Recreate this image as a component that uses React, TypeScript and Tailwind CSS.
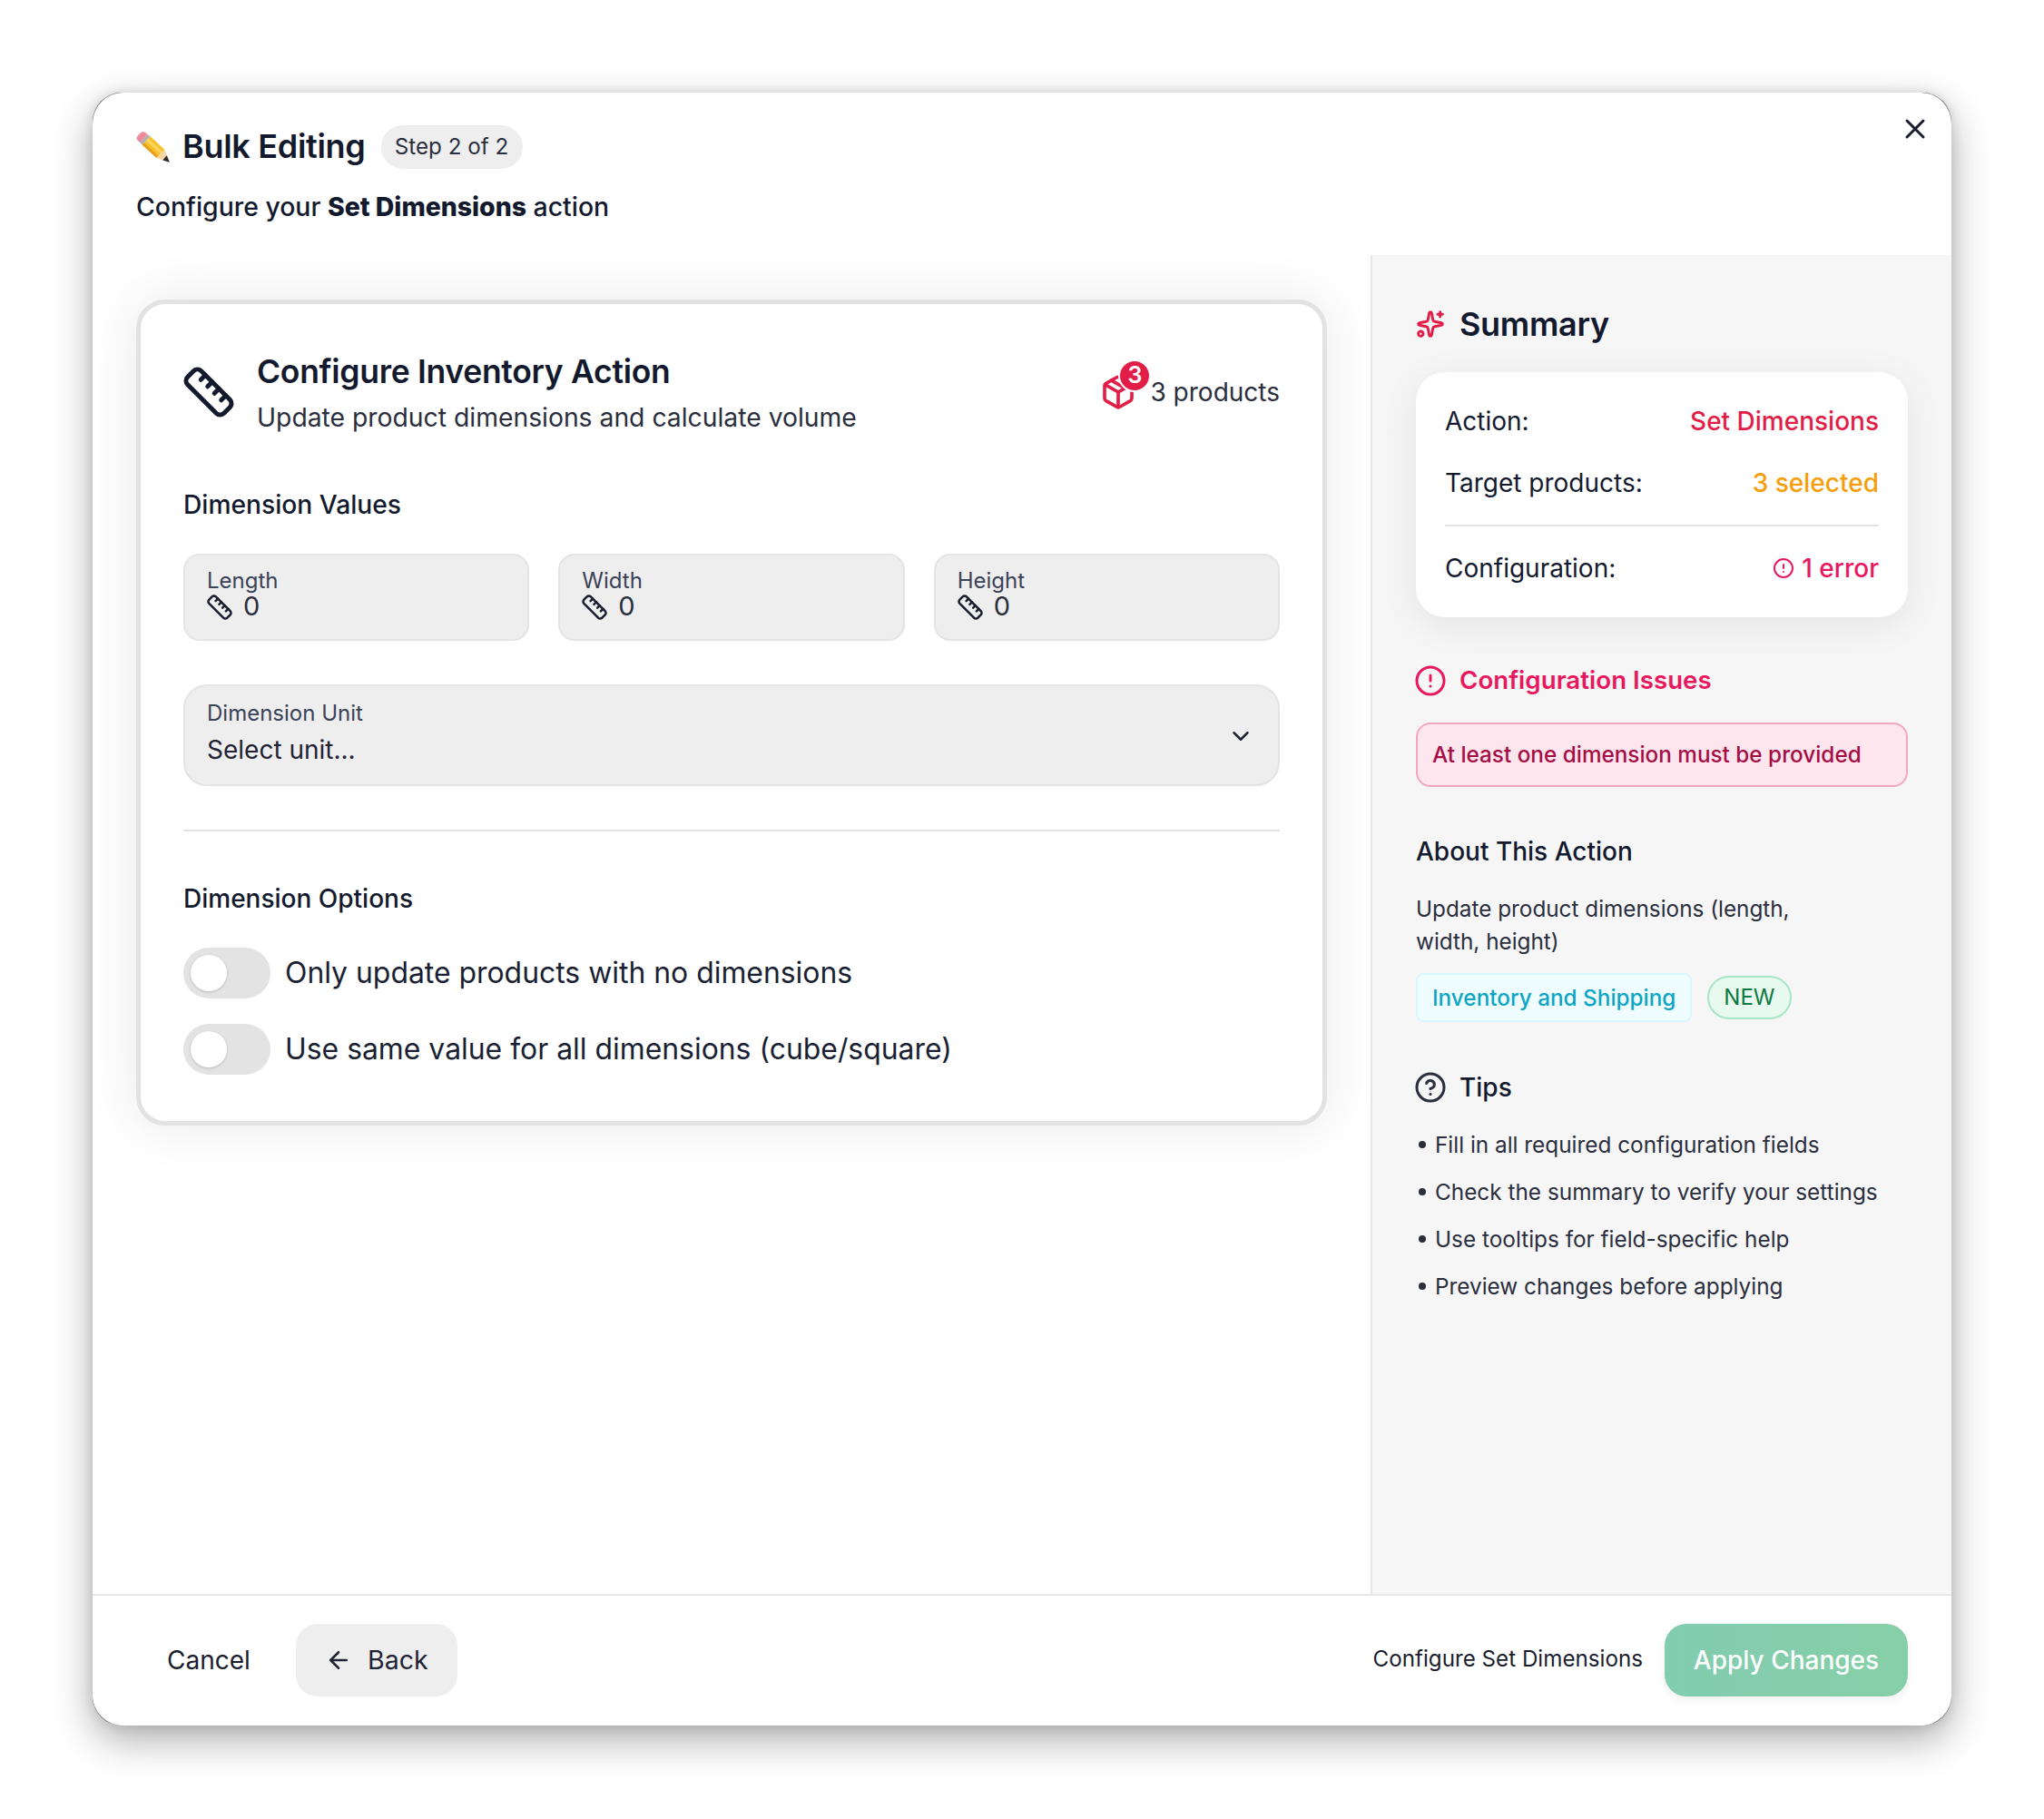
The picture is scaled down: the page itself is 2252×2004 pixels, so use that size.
import { AlertCircle, ArrowLeft, ChevronDown, CircleHelp, Package, Ruler, Sparkles, X } from "lucide-react";

const PencilEmoji = () => (
  <svg width="38" height="36" viewBox="0 0 38 36" className="shrink-0">
    <path d="M15.4 6.1 L31.3 20.7 L22.5 30.1 L6.6 15.5 Z" fill="#f7c22c" />
    <path d="M13.2 8.4 L29 23 L26.8 25.4 L11 10.8 Z" fill="#fbd65a" />
    <path d="M8.8 13.2 L24.6 27.8 L22.5 30.1 L6.6 15.5 Z" fill="#e8a01c" />
    <path d="M31.3 20.7 L36.8 34.8 L22.5 30.1 Z" fill="#f5d7a4" />
    <path d="M33.8 27.2 L36.8 34.8 L29.2 32.4 Z" fill="#2f2a2a" />
    <path d="M4.2 3 C6 0.8 8.6 0.7 10.4 2.2 L12.8 4.4 L4.4 13.2 L2 11 C0.2 9.2 0.2 7 2 5.2 Z" fill="#ee8c9c" />
    <path d="M12.8 4.4 L15.4 6.1 L6.6 15.5 L4.4 13.2 Z" fill="#a9b0b8" />
  </svg>
);

const NumberField = ({ label }: { label: string }) => (
  <div className="h-[96px] rounded-[18px] border-2 border-[#e4e4e5] bg-[#eeeeef] pl-[24px] pt-[14px]">
    <p className="text-[24px] leading-[28px] text-[#3a4256]">{label}</p>
    <div className="flex h-[28px] items-center gap-[11px] text-[29px] text-[#2a2e3d]">
      <Ruler size={30} strokeWidth={2} className="-ml-[1px] mt-[2px] text-[#1a1d2e]" />
      <span>0</span>
    </div>
  </div>
);

const Toggle = ({ label }: { label: string }) => (
  <div className="flex items-center gap-[16px]">
    <div className="flex h-[56px] w-[96px] items-center rounded-full bg-[#e3e3e4] pl-2">
      <div className="h-10 w-10 rounded-full bg-white shadow-[0_1px_3px_rgba(0,0,0,0.18)]" />
    </div>
    <span className="text-[31.9px] leading-[40px] text-[#1a1f33]">{label}</span>
  </div>
);

const SummaryRow = ({ label, children }: { label: string; children: React.ReactNode }) => (
  <div className="flex items-center justify-between text-[28px] leading-[36px]">
    <span className="text-[#141a2e]">{label}</span>
    {children}
  </div>
);

const tips = [
  "Fill in all required configuration fields",
  "Check the summary to verify your settings",
  "Use tooltips for field-specific help",
  "Preview changes before applying",
];

export default function App() {
  return (
    <div className="min-h-[2004px] bg-white p-[102px] font-['Inter',sans-serif]">
      <div className="h-[1799px] w-[2048px] overflow-hidden rounded-[32px] bg-[#77797f] shadow-[0_16px_44px_rgba(0,0,0,0.32),0_0_14px_rgba(0,0,0,0.12)]">
        <div className="relative flex h-full flex-col overflow-hidden rounded-[34px] bg-white">
          <X size={36} strokeWidth={2} className="absolute right-[22px] top-[22px] text-[#1a1d2e]" />

          <header className="h-[179px] shrink-0 px-12 pt-9">
            <div className="flex h-12 items-center">
              <PencilEmoji />
              <h1 className="-mt-[2px] ml-[13px] text-[36px] font-semibold tracking-[-0.3px] text-[#141a2e]">Bulk Editing</h1>
              <span className="ml-[17px] flex h-12 w-[156px] items-center justify-center rounded-full bg-[#eeeeef] text-[24.2px] text-[#2a2e3d]">
                Step 2 of 2
              </span>
            </div>
            <p className="mt-[24px] text-[28.4px] font-medium leading-[36px] text-[#141a2e]">
              Configure your <strong className="font-extrabold">Set Dimensions</strong> action
            </p>
          </header>

          <div className="flex min-h-0 flex-1">
            <main className="w-[1408px] shrink-0 px-12 pt-[49px]">
              <section className="h-[910px] rounded-[32px] border-[5px] border-[#e2e2e2] bg-white px-[47px] pt-[47px] shadow-[0_0_60px_rgba(0,0,0,0.09)]">
                <div className="flex items-start justify-between">
                  <div className="flex">
                    <Ruler size={60} strokeWidth={2} className="-ml-[2px] mt-[20px] text-[#141a2e]" />
                    <div className="ml-[23px]">
                      <h2 className="text-[35.5px] font-semibold leading-[56px] tracking-[-0.3px] text-[#141a2e]">Configure Inventory Action</h2>
                      <p className="text-[28.3px] leading-[44px] text-[#2a2e3d]">Update product dimensions and calculate volume</p>
                    </div>
                  </div>
                  <div className="relative mt-[30px] flex items-center gap-[15px]">
                    <Package size={40} strokeWidth={2.2} className="text-[#e11d48]" />
                    <span className="absolute -top-[16px] left-[20px] flex h-9 w-9 items-center justify-center rounded-full border-2 border-white bg-[#e11d48] text-[25px] font-semibold text-white">
                      3
                    </span>
                    <span className="text-[28px] leading-[40px] text-[#2a2e3d]">3 products</span>
                  </div>
                </div>

                <h3 className="mt-[56px] text-[28.2px] font-medium leading-[36px] text-[#141a2e]">Dimension Values</h3>
                <div className="mt-[36px] grid grid-cols-3 gap-8">
                  <NumberField label="Length" />
                  <NumberField label="Width" />
                  <NumberField label="Height" />
                </div>

                <div className="mt-[48px] flex h-[112px] items-center justify-between rounded-[26px] border-2 border-[#e4e4e5] bg-[#eeeeef] pl-[24px] pr-[26px]">
                  <div className="pb-[9px]">
                    <p className="text-[24px] leading-[36px] text-[#3a4256]">Dimension Unit</p>
                    <p className="mt-[4px] text-[28px] leading-[36px] text-[#1f2333]">Select unit...</p>
                  </div>
                  <ChevronDown size={30} strokeWidth={2} className="mt-[1px] text-[#1f2333]" />
                </div>

                <div className="mt-[48px] h-[2px] bg-[#e3e3e4]" />

                <h3 className="mt-[56px] text-[28px] font-medium leading-[36px] text-[#141a2e]">Dimension Options</h3>
                <div className="mt-[36px] flex flex-col gap-7">
                  <Toggle label="Only update products with no dimensions" />
                  <Toggle label="Use same value for all dimensions (cube/square)" />
                </div>
              </section>
            </main>

            <aside className="flex-1 border-l-2 border-[#e6e6e7] bg-[#f6f6f7] pl-[48px] pr-[48px] pt-[54px]">
              <div className="flex items-center gap-[16px]">
                <Sparkles size={32} strokeWidth={2.2} className="text-[#e11d48]" />
                <h2 className="text-[36px] font-semibold leading-[44px] tracking-[-0.3px] text-[#141a2e]">Summary</h2>
              </div>

              <div className="mt-[31px] h-[270px] rounded-[32px] bg-white px-8 pt-[36px] shadow-[0_8px_40px_rgba(0,0,0,0.08)]">
                <SummaryRow label="Action:">
                  <span className="font-medium text-[#e11d48]">Set Dimensions</span>
                </SummaryRow>
                <div className="mt-[32px]">
                  <SummaryRow label="Target products:">
                    <span className="font-medium text-[#f59e0b]">3 selected</span>
                  </SummaryRow>
                </div>
                <div className="mt-[28px] h-[2px] bg-[#e3e3e4]" />
                <div className="mt-[28px]">
                  <SummaryRow label="Configuration:">
                    <span className="flex items-center gap-[8px] font-medium text-[#e8185f]">
                      <AlertCircle size={24} strokeWidth={2} />1 error
                    </span>
                  </SummaryRow>
                </div>
              </div>

              <div className="mt-[50px] flex h-10 items-center gap-[18px]">
                <AlertCircle size={36} strokeWidth={2} className="-ml-[2px] text-[#e8185f]" />
                <h3 className="-ml-[4px] text-[27.7px] font-semibold text-[#e8185f]">Configuration Issues</h3>
              </div>
              <div className="mt-[26px] flex h-[71px] items-center rounded-[16px] border-2 border-[#f3a6c0] bg-[#fde6ee] pl-[16px] text-[24.3px] font-medium text-[#a50e45]">
                At least one dimension must be provided
              </div>

              <h3 className="mt-[53px] text-[28px] font-medium leading-[36px] text-[#141a2e]">About This Action</h3>
              <p className="mt-[27px] w-[470px] text-[24.3px] leading-[36px] text-[#2a2e3d]">Update product dimensions (length, width, height)</p>

              <div className="mt-[17px] flex items-center gap-[17px]">
                <span className="flex h-[54px] items-center rounded-[8px] border-2 border-[#d6f7fc] bg-[#effdff] px-[16px] text-[24.3px] font-medium text-[#0ea5c4]">
                  Inventory and Shipping
                </span>
                <span className="flex h-[48px] items-center rounded-full border-2 border-[#a7e6c4] bg-[#e8f9ef] px-[16px] text-[24px] text-[#0f7a40]">
                  NEW
                </span>
              </div>

              <div className="mt-[52px] flex h-10 items-center gap-[18px]">
                <CircleHelp size={36} strokeWidth={2} className="-ml-[2px] text-[#2a2e3d]" />
                <h3 className="-ml-[4px] text-[28px] font-medium text-[#141a2e]">Tips</h3>
              </div>

              <ul className="mt-[25px] flex flex-col gap-[16px]">
                {tips.map((tip) => (
                  <li key={tip} className="flex items-center text-[24.35px] leading-[36px] text-[#2a2e3d]">
                    <span className="ml-[3px] mr-[10px] h-[8px] w-[8px] rounded-full bg-[#2a2e3d]" />
                    {tip}
                  </li>
                ))}
              </ul>
            </aside>
          </div>

          <footer className="flex h-[145px] shrink-0 items-center justify-between border-t-2 border-[#e8e8e9] bg-white px-12 pb-[1px]">
            <div className="flex items-center">
              <span className="ml-[34px] text-[28px] text-[#1a1d2e]">Cancel</span>
              <button className="ml-[50px] flex h-20 w-[178px] items-center justify-center gap-[17px] rounded-[24px] bg-[#eeeeef] text-[28.5px] text-[#1f2333]">
                <ArrowLeft size={30} strokeWidth={2} />
                Back
              </button>
            </div>
            <div className="flex items-center gap-[24px]">
              <span className="-mt-[2px] text-[24.2px] text-[#1a1d2e]">Configure Set Dimensions</span>
              <button className="flex h-20 w-[268px] items-center justify-center rounded-[24px] bg-gradient-to-r from-[#82ccb0] to-[#86cfa7] text-[28px] font-medium text-white shadow-[0_4px_10px_rgba(0,0,0,0.06)]">
                Apply Changes
              </button>
            </div>
          </footer>
        </div>
      </div>
    </div>
  );
}
